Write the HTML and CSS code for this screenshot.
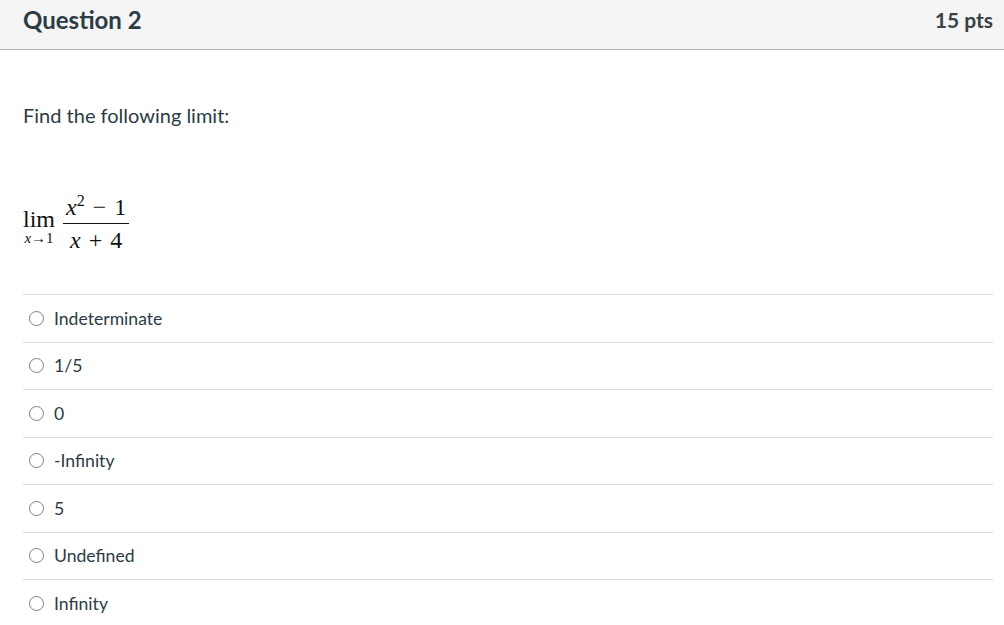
FILE: index.html
```html
<!DOCTYPE html>
<html lang="en">
<head>
  <meta charset="UTF-8" />
  <title>Question 2</title>
  <link rel="stylesheet" href="styles.css">
</head>
<body>
  <div class="question-header">
    <h2 class="question-name">Question 2</h2>
    <div class="question-points">15 pts</div>
  </div>

  <div class="question-body">
    <p class="question-text">Find the following limit:</p>

    <div class="math">
      <div class="lim">
        <span class="lim-word">lim</span>
        <span class="lim-sub"><i>x</i>→1</span>
      </div>
      <div class="frac">
        <span class="num"><i>x</i><sup>2</sup><span class="op">−</span>1</span>
        <span class="den"><i>x</i><span class="op">+</span>4</span>
      </div>
    </div>

    <div class="answers">
      <label class="answer"><span class="radio"></span>Indeterminate</label>
      <label class="answer"><span class="radio"></span>1/5</label>
      <label class="answer"><span class="radio"></span>0</label>
      <label class="answer"><span class="radio"></span>-Infinity</label>
      <label class="answer"><span class="radio"></span>5</label>
      <label class="answer"><span class="radio"></span>Undefined</label>
      <label class="answer"><span class="radio"></span>Infinity</label>
    </div>
  </div>
</body>
</html>
```

FILE: styles.css
```css
body {
  margin: 0;
  font-family: Lato, "Open Sans", sans-serif;
  color: #2d3b45;
  background: #ffffff;
}

/* Header bar */
.question-header {
  display: flex;
  justify-content: space-between;
  align-items: flex-start;
  height: 50px;
  padding: 5px 11px 0 23px;
  box-sizing: border-box;
  background: #f5f5f5;
  border-bottom: 1px solid #b4b4b4;
}

.question-name {
  margin: 0;
  font-size: 24px;
  line-height: 30px;
  font-weight: bold;
  color: #2d3b45;
}

.question-points {
  font-size: 21px;
  line-height: 30px;
  font-weight: bold;
  color: #3a4147;
}

/* Question content */
.question-body {
  padding: 0 11px 0 23px;
}

.question-text {
  margin: 0;
  padding-top: 51px;
  font-size: 20px;
  line-height: 28px;
}

.math {
  display: flex;
  align-items: center;
  gap: 8px;
  margin-top: 63px;
  font-family: "Liberation Serif", "DejaVu Serif", serif;
  color: #111;
}

.math i {
  font-style: italic;
}

.lim {
  display: flex;
  flex-direction: column;
  align-items: center;
  padding-top: 8px;
}

.lim-word {
  font-size: 24px;
  line-height: 20px;
}

.lim-sub {
  font-size: 15px;
  line-height: 18px;
}

.frac {
  display: flex;
  flex-direction: column;
  align-items: center;
  font-size: 24px;
}

.num {
  padding: 0 3px 1px;
  border-bottom: 1px solid #111;
  line-height: 30px;
}

.den {
  line-height: 32px;
}

.num sup {
  font-size: 16px;
  vertical-align: 9px;
  line-height: 0;
}

.op {
  margin: 0 8px;
}

/* Answer list */
.answers {
  margin-top: 38px;
}

.answer {
  display: flex;
  align-items: center;
  height: 46.5px;
  border-top: 1px solid #dddddd;
  font-size: 17.6px;
  color: #2d3b45;
}

.radio {
  width: 15px;
  height: 15px;
  margin: 0 10px 0 6px;
  border: 1px solid #808080;
  border-radius: 50%;
  box-sizing: border-box;
}
```
